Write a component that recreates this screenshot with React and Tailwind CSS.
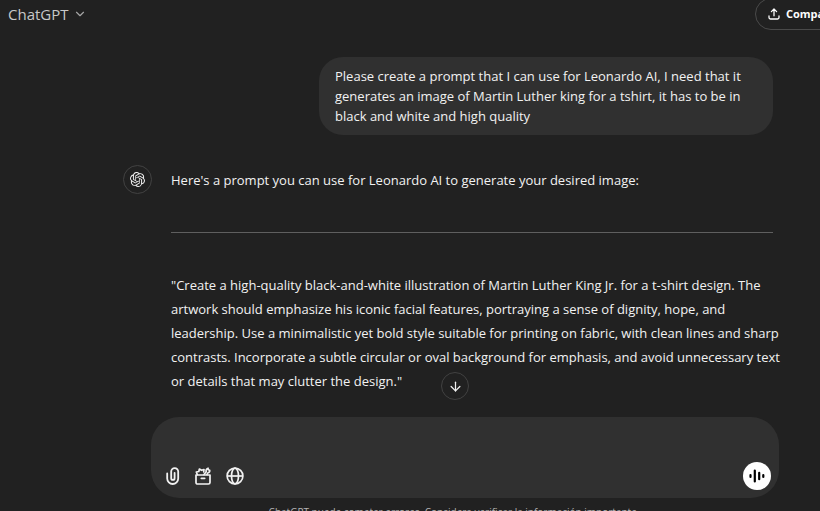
import React from "react";
import { ArrowDown, ChevronDown } from "lucide-react";
import { SiOpenai } from "react-icons/si";

const promptLines = [
	"\"Create a high-quality black-and-white illustration of Martin Luther King Jr. for a t-shirt design. The",
	"artwork should emphasize his iconic facial features, portraying a sense of dignity, hope, and",
	"leadership. Use a minimalistic yet bold style suitable for printing on fabric, with clean lines and sharp",
	"contrasts. Incorporate a subtle circular or oval background for emphasis, and avoid unnecessary text",
	"or details that may clutter the design.\"",
];

const questionLines = [
	"Please create a prompt that I can use for Leonardo AI, I need that it",
	"generates an image of Martin Luther king for a tshirt, it has to be in",
	"black and white and high quality",
];

function ShareIcon() {
	return (
		<svg width="12" height="12" viewBox="0 0 12 12" fill="none" stroke="currentColor" strokeWidth="1.3" strokeLinecap="round" strokeLinejoin="round">
			<path d="M6 7.8V1.2M3.4 3.6L6 1l2.6 2.6M1 8v1.6c0 .8.6 1.4 1.4 1.4h7.2c.8 0 1.4-.6 1.4-1.4V8" />
		</svg>
	);
}

function ClipIcon() {
	return (
		<svg width="14" height="18" viewBox="0 0 14 18" fill="none" stroke="currentColor" strokeWidth="1.8" strokeLinecap="round">
			<path d="M1.2 6.5v5a5.5 5.5 0 0 0 11 0V4.6a3.5 3.5 0 0 0-7 0v6.6a1.7 1.7 0 0 0 3.4 0V5.8" />
		</svg>
	);
}

function ToolboxIcon() {
	return (
		<svg width="16" height="18" viewBox="0 0 16 18" fill="none" stroke="currentColor" strokeWidth="1.7" strokeLinecap="round" strokeLinejoin="round">
			<path d="M1 8h14v7.4c0 .9-.7 1.6-1.6 1.6H2.600c-.9 0-1.6-.7-1.6-1.6V8z" />
			<path d="M6.3 11.3h3.4" />
			<path d="M2.3 7.500L1.300 5l2.500-.5.6-2.500 2.200 1.300L9 2.500l-.3 2.300" />
			<path d="M9 7.500l2.200-2.700c-.5-1.700.2-3.200 1.800-3.600l.2 1.500 1.500.5c.2 1.500-.7 2.600-2 2.800l-.7 1.500" />
		</svg>
	);
}

function GlobeIcon() {
	return (
		<svg width="18" height="18" viewBox="0 0 18 18" fill="none" stroke="currentColor" strokeWidth="1.7">
			<circle cx="9" cy="9" r="7.9" />
			<ellipse cx="9" cy="9" rx="3.5" ry="7.9" />
			<path d="M1.2 9h15.6" />
		</svg>
	);
}

function VoiceIcon() {
	return (
		<svg width="16" height="16" viewBox="0 0 16 16" fill="none" stroke="currentColor" strokeWidth="2.2" strokeLinecap="round">
			<path d="M1.5 7v2M5.8 2.5v11M10.2 4.8v6.4M14.3 7v2" />
		</svg>
	);
}

function Header() {
	return (
		<header className="flex h-7 shrink-0 items-center justify-between pl-2">
			<button className="flex items-center gap-1 text-[15px] text-[#c8c8c8]">
				ChatGPT
				<ChevronDown size={14} strokeWidth={2} className="text-[#a5a5a5]" />
			</button>
			<div className="w-[65px]">
				<button className="flex h-8 w-28 items-center gap-[6px] rounded-full border border-[#4a4a4a] pl-3 text-[11px] font-bold text-white">
					<ShareIcon />
					Compartir
				</button>
			</div>
		</header>
	);
}

function Conversation() {
	return (
		<main className="relative pt-[29px] pr-[47px] pl-[123px] text-[13px] text-[#f2f2f2]">
			<div className="ml-auto w-[454px] rounded-3xl bg-[#303030] px-4 py-[9px] leading-5">
				{questionLines.map((line) => (
					<p key={line} className="whitespace-nowrap">{line}</p>
				))}
			</div>

			<div className="mt-[30px] flex gap-[19px]">
				<div className="flex size-[29px] shrink-0 items-center justify-center rounded-full border border-[#424242]">
					<SiOpenai size={15} />
				</div>
				<div className="min-w-0 flex-1 pt-[3px] leading-6">
					<p>Here's a prompt you can use for Leonardo AI to generate your desired image:</p>
					<hr className="mt-10 mb-10 border-[#5f5f5f]" />
					{promptLines.map((line) => (
						<p key={line} className="whitespace-nowrap">{line}</p>
					))}
				</div>
			</div>

			<button aria-label="Scroll to bottom" className="absolute -bottom-[7px] left-[441px] flex size-7 items-center justify-center rounded-full border border-[#424242] bg-[#212121]">
				<ArrowDown size={15} strokeWidth={2} />
			</button>
		</main>
	);
}

function Composer() {
	return (
		<form className="mt-6 mr-[41px] ml-[151px] rounded-[28px] bg-[#303030] px-3 pb-2">
			<textarea aria-label="Message" className="block h-[45px] w-full resize-none bg-transparent pt-3 text-[13px] text-white outline-none" />
			<div className="flex items-center justify-between">
				<div className="flex items-center gap-[15px] pl-[3px] text-[#f2f2f2]">
					<button type="button" aria-label="Attach file"><ClipIcon /></button>
					<button type="button" aria-label="Tools"><ToolboxIcon /></button>
					<button type="button" aria-label="Search the web"><GlobeIcon /></button>
				</div>
				<button type="button" aria-label="Voice mode" className="-mr-1 flex size-7 items-center justify-center rounded-full bg-white text-black">
					<VoiceIcon />
				</button>
			</div>
		</form>
	);
}

function App() {
	return (
		<div className="flex h-screen flex-col overflow-hidden bg-[#212121] font-['Open_Sans','Noto_Sans',sans-serif]">
			<Header />
			<Conversation />
			<Composer />
			<footer className="mt-2 mr-[63px] ml-[151px] shrink-0 text-center text-[10px] leading-3 text-[#b4b4b4]">
				ChatGPT puede cometer errores. Considera verificar la información importante.
			</footer>
		</div>
	);
}

export default App;
